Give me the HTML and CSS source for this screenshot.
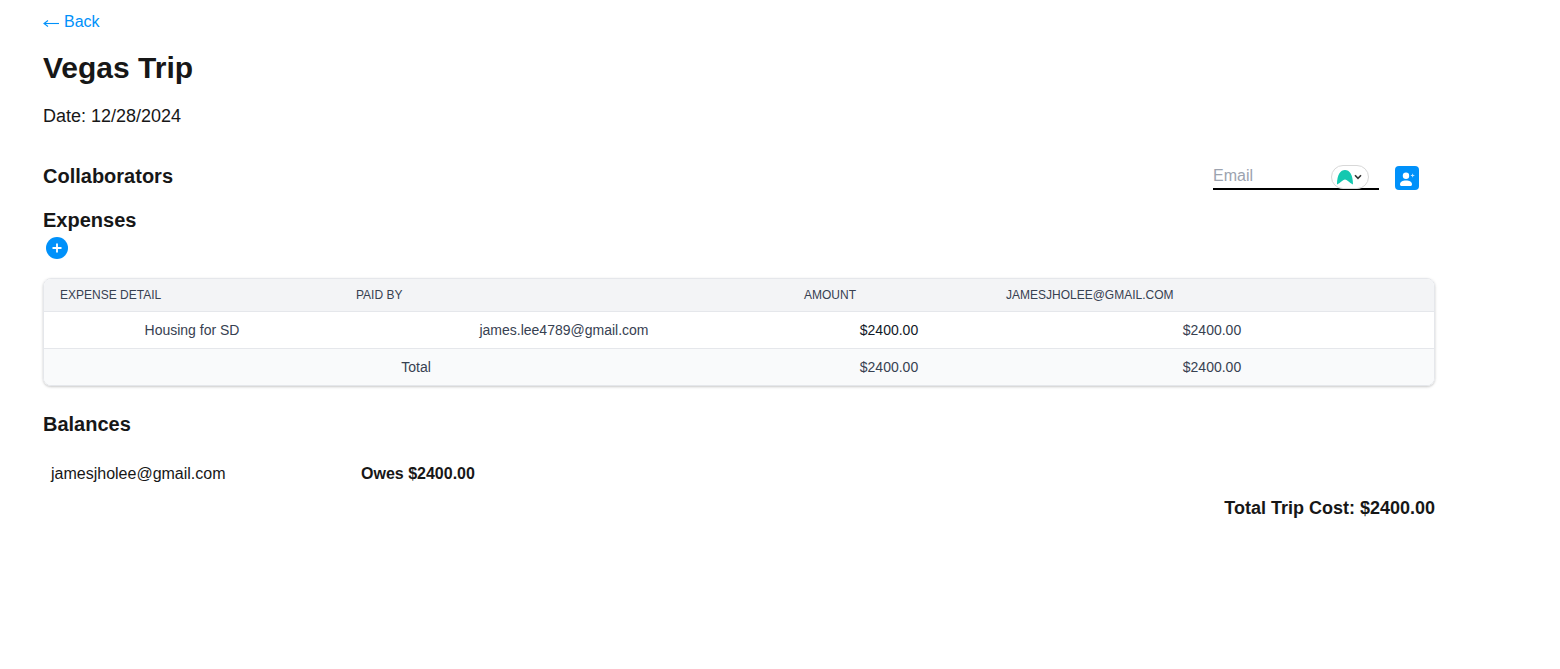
FILE: index.html
```html
<!DOCTYPE html>
<html lang="en">
<head>
    <meta charset="UTF-8">
    <title>Vegas Trip</title>
    <link rel="stylesheet" href="styles.css">
</head>
<body>
    <div class="page">
        <a class="back-link" href="#">
            <svg class="back-arrow" width="16" height="10" viewBox="0 0 16 10">
                <path d="M16 5.5 H2" stroke="#0091fa" stroke-width="1.1"/>
                <path d="M5 2.5 L1 5.5 L5 8.5" fill="none" stroke="#0091fa" stroke-width="1.1"/>
            </svg>
            Back
        </a>
        <h1>Vegas Trip</h1>
        <p class="trip-date">Date: 12/28/2024</p>

        <div class="collab-row">
            <h2>Collaborators</h2>
            <form class="collab-form">
                <div class="email-wrap">
                    <input class="email-input" type="text" placeholder="Email">
                    <span class="pass-badge">
                        <svg width="16" height="15" viewBox="0 0 16 15">
                            <path d="M0 14.5 C0 4.5 3.5 0 8 0 C12.5 0 16 4.5 16 14.5 L13.4 13 C12 11.5 10 10 8 9.4 C6 10 4 11.5 2.6 13 Z" fill="#14c8b0"/>
                        </svg>
                        <svg width="8" height="6" viewBox="0 0 8 6">
                            <path d="M1 1.2 L4 4.4 L7 1.2" fill="none" stroke="#333" stroke-width="1.6"/>
                        </svg>
                    </span>
                </div>
                <button class="invite-btn" type="button">
                    <svg width="24" height="24" viewBox="0 0 24 24">
                        <circle cx="11" cy="9.8" r="3.2" fill="#fff"/>
                        <path d="M5 18.5 C5 15.5 7.5 14.4 11 14.4 C14.5 14.4 17 15.5 17 18.5 C17 19.6 16 20 15 20 H7 C6 20 5 19.6 5 18.5 Z" fill="#fff"/>
                        <path d="M15.9 9.5 H19.3 M17.6 7.8 V11.2" stroke="#fff" stroke-width="0.9" opacity="0.8"/>
                    </svg>
                </button>
            </form>
        </div>

        <h2 class="expenses-title">Expenses</h2>
        <button class="add-btn" type="button">
            <svg width="10" height="10" viewBox="0 0 10 10">
                <path d="M5 0.5 V9.5 M0.5 5 H9.5" stroke="#fff" stroke-width="1.8"/>
            </svg>
        </button>

        <div class="table-wrap">
            <table>
                <colgroup>
                    <col class="col-detail">
                    <col class="col-paid">
                    <col class="col-amount">
                    <col>
                </colgroup>
                <thead>
                    <tr>
                        <th>Expense Detail</th>
                        <th>Paid By</th>
                        <th>Amount</th>
                        <th>jamesjholee@gmail.com</th>
                    </tr>
                </thead>
                <tbody>
                    <tr>
                        <td>Housing for SD</td>
                        <td>james.lee4789@gmail.com</td>
                        <td class="dark">$2400.00</td>
                        <td>$2400.00</td>
                    </tr>
                    <tr class="total-row">
                        <td colspan="2">Total</td>
                        <td>$2400.00</td>
                        <td>$2400.00</td>
                    </tr>
                </tbody>
            </table>
        </div>

        <h2 class="balances-title">Balances</h2>
        <div class="balance-row">
            <span class="balance-name">jamesjholee@gmail.com</span>
            <span class="balance-value">Owes $2400.00</span>
        </div>
        <div class="trip-total">Total Trip Cost: $2400.00</div>
    </div>
</body>
</html>
```
FILE: styles.css
```css
body {
    margin: 0;
    font-family: "Liberation Sans", Arial, sans-serif;
    color: #171717;
    background: white;
}
.page {
    width: 1392px;
    margin-left: 43px;
    padding-top: 12px;
}
.back-link {
    display: flex;
    align-items: center;
    gap: 5px;
    font-size: 16px;
    line-height: 20px;
    color: #0091fa;
    text-decoration: none;
}
.back-arrow {
    margin-top: 2px;
}
h1 {
    margin: 18px 0 0;
    font-size: 30px;
    line-height: 36px;
}
.trip-date {
    margin: 18px 0 0;
    font-size: 18px;
    line-height: 24px;
}
h2 {
    margin: 0;
    font-size: 20px;
    line-height: 28px;
}
.collab-row {
    display: flex;
    justify-content: space-between;
    align-items: center;
    margin-top: 31px;
    padding-right: 16px;
    height: 34px;
}
.collab-form {
    display: flex;
    align-items: flex-end;
    gap: 16px;
    margin-top: 2px;
}
.email-wrap {
    position: relative;
}
.email-input {
    display: block;
    box-sizing: border-box;
    width: 166px;
    height: 26px;
    padding: 0;
    border: none;
    border-bottom: 2px solid black;
    outline: none;
    font-family: inherit;
    font-size: 16px;
}
.email-input::placeholder {
    color: #9ca3af;
}
.pass-badge {
    position: absolute;
    top: 1px;
    left: 118px;
    box-sizing: border-box;
    width: 38px;
    height: 24px;
    display: flex;
    align-items: center;
    gap: 1px;
    padding-left: 5px;
    background: white;
    border: 1px solid #d8d8d8;
    border-radius: 12px;
}
.invite-btn {
    width: 24px;
    height: 24px;
    padding: 0;
    border: none;
    border-radius: 4px;
    background: #0091fa;
    display: flex;
    align-items: center;
    justify-content: center;
}
.expenses-title {
    margin-top: 13px;
}
.add-btn {
    display: flex;
    align-items: center;
    justify-content: center;
    width: 22px;
    height: 22px;
    margin: 3px 0 0 3px;
    padding: 0;
    border: none;
    border-radius: 50%;
    background: #0091fa;
}
.table-wrap {
    margin-top: 19px;
    border: 1px solid #e5e7eb;
    border-radius: 8px;
    overflow: hidden;
    box-shadow: 0 1px 3px rgba(0, 0, 0, 0.15), 0 1px 2px rgba(0, 0, 0, 0.08);
}
table {
    width: 100%;
    table-layout: fixed;
    border-collapse: collapse;
    font-size: 14px;
    color: #374151;
}
.col-detail {
    width: 296px;
}
.col-paid {
    width: 448px;
}
.col-amount {
    width: 202px;
}
th {
    height: 32px;
    padding: 0 16px;
    background: #f3f4f6;
    font-size: 12px;
    font-weight: normal;
    text-align: left;
    text-transform: uppercase;
}
td {
    height: 36px;
    padding: 0 16px;
    border-top: 1px solid #e5e7eb;
    text-align: center;
}
.dark {
    color: #111827;
}
.total-row {
    background: #f9fafb;
}
.balances-title {
    margin-top: 24px;
}
.balance-row {
    display: flex;
    margin-top: 24px;
    padding-left: 8px;
    font-size: 16px;
    line-height: 24px;
}
.balance-name {
    width: 310px;
}
.balance-value {
    font-weight: bold;
}
.trip-total {
    margin-top: 10px;
    text-align: right;
    font-size: 18px;
    line-height: 24px;
    font-weight: bold;
}
```
